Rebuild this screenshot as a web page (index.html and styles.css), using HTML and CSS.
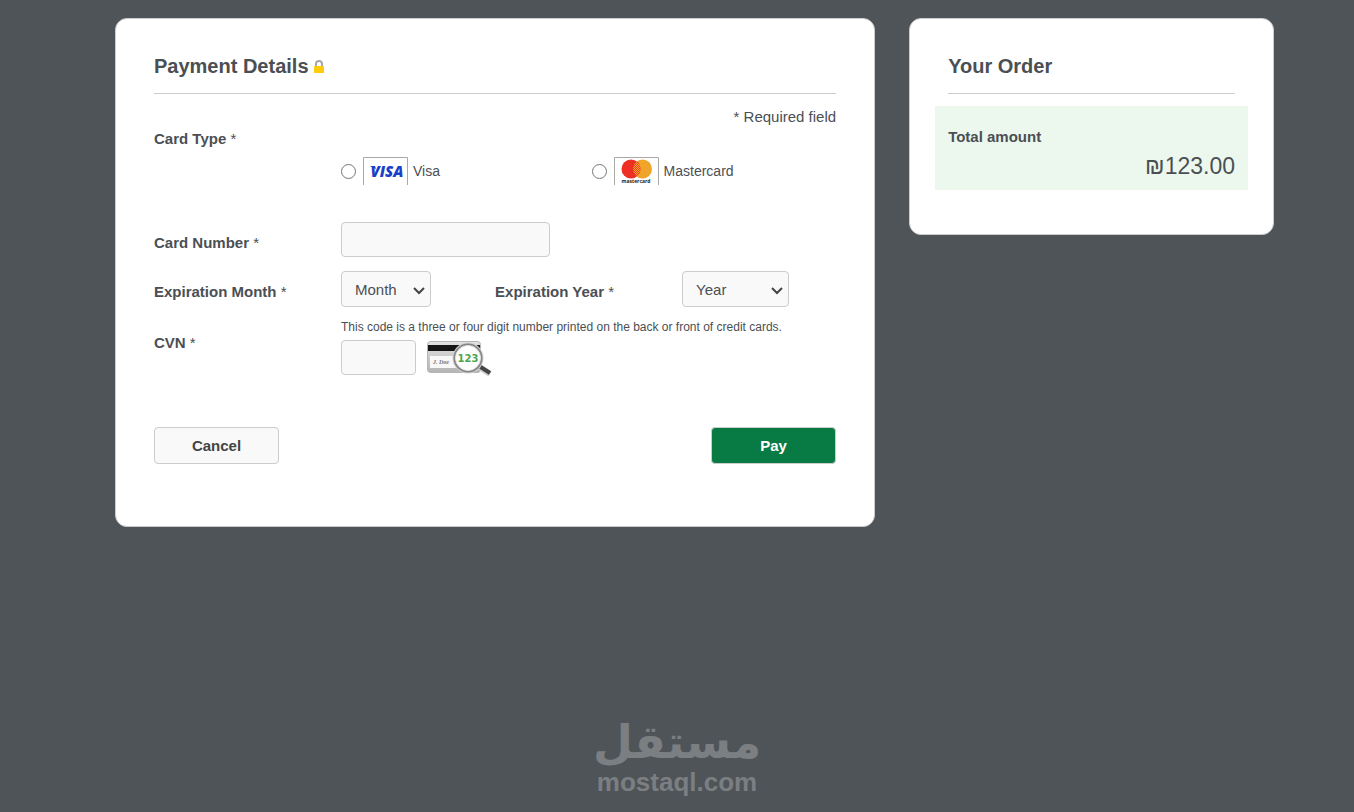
FILE: index.html
```html
<!DOCTYPE html>
<html lang="en">
<head>
  <meta charset="UTF-8">
  <meta name="viewport" content="width=device-width, initial-scale=1">
  <title>Payment Details</title>
  <link rel="stylesheet" href="styles.css">
</head>
<body>
  <main class="container">
    <!-- Payment form -->
    <form class="card payment">
      <h1 class="card-title">Payment Details
        <svg class="lock" viewBox="3 0 12 14" aria-hidden="true">
          <path d="M5 7V4a3 3 0 0 1 6 0V7" fill="none" stroke="#a6a6a6" stroke-width="2"/>
          <rect x="3" y="6" width="10" height="7" rx="0.500" fill="#ffcc0d"/>
        </svg>
      </h1>
      <p class="required">* Required field</p>

      <fieldset class="card-type">
        <legend>Card Type <span class="star">*</span></legend>
        <div class="options">
          <label class="option">
            <input type="radio" name="card_type" value="visa">
            <svg class="brand" viewBox="0 0 45 28" aria-hidden="true">
              <path d="M0.500 28V0.500h44V28" fill="#fff" stroke="#a9a9a9"/>
              <text x="24" y="20" class="visa-text">VISA</text>
              <path d="M7 9h5l1 3z" fill="#1a3fc8"/>
            </svg>
            <span>Visa</span>
          </label>
          <label class="option">
            <input type="radio" name="card_type" value="mastercard">
            <svg class="brand" viewBox="0 0 45 28" aria-hidden="true">
              <defs>
                <pattern id="dots" width="2" height="2" patternUnits="userSpaceOnUse">
                  <rect width="2" height="2" fill="#f5a623"/>
                  <rect width="1" height="1" fill="#ee4423"/>
                  <rect x="1" y="1" width="1" height="1" fill="#ee4423"/>
                </pattern>
              </defs>
              <path d="M0.500 28V0.500h44V28" fill="#fff" stroke="#a9a9a9"/>
              <circle cx="28.500" cy="12" r="9.500" fill="#f0a52a"/>
              <circle cx="17" cy="12" r="9.500" fill="#ee2f24"/>
              <path d="M22.750 4.500a9.500 9.500 0 0 1 0 15a9.500 9.500 0 0 1 0-15z" fill="url(#dots)"/>
              <text x="22" y="26" class="mc-text">mastercard</text>
            </svg>
            <span>Mastercard</span>
          </label>
        </div>
      </fieldset>

      <div class="row number-row">
        <label for="card-number">Card Number <span class="star">*</span></label>
        <input type="text" id="card-number" class="field card-number" autocomplete="off">
      </div>

      <div class="expiry">
        <div class="row">
          <label for="month">Expiration Month <span class="star">*</span></label>
          <select id="month" class="field month">
            <option>Month</option>
            <option>01</option><option>02</option><option>03</option><option>04</option>
            <option>05</option><option>06</option><option>07</option><option>08</option>
            <option>09</option><option>10</option><option>11</option><option>12</option>
          </select>
        </div>
        <div class="row">
          <label for="year">Expiration Year <span class="star">*</span></label>
          <select id="year" class="field year">
            <option>Year</option>
            <option>2024</option><option>2025</option><option>2026</option><option>2027</option>
          </select>
        </div>
      </div>

      <div class="row cvn-row">
        <label for="cvn">CVN <span class="star">*</span></label>
        <div>
          <p class="note" id="cvn-note">This code is a three or four digit number printed on the back or front of credit cards.</p>
          <div class="cvn-line">
            <input type="text" id="cvn" class="field cvn" aria-describedby="cvn-note" autocomplete="off">
            <svg class="cvn-card" viewBox="0 0 66 36" aria-hidden="true">
              <defs>
                <linearGradient id="plastic" x1="0" y1="0" x2="0" y2="1">
                  <stop offset="0" stop-color="#e2e2e2"/>
                  <stop offset="1" stop-color="#b5b5b5"/>
                </linearGradient>
              </defs>
              <rect x="1.500" y="1.500" width="53" height="31" rx="3" fill="url(#plastic)" stroke="#b5b5b5"/>
              <rect x="2" y="5" width="52" height="6" fill="#151515"/>
              <rect x="4" y="16" width="32" height="12" fill="#f8f8f8"/>
              <text x="7" y="24" class="sign-text">J. Doe</text>
              <path d="M52 26l12 8" stroke="#cfcfcf" stroke-width="6"/>
              <path d="M53 26l11 7" stroke="#454545" stroke-width="4"/>
              <circle cx="42" cy="18" r="15.500" fill="#d0d0d0"/>
              <circle cx="42" cy="18" r="14.500" fill="#858585"/>
              <circle cx="42" cy="18" r="12.500" fill="#fff" stroke="#e4e4e4"/>
              <text x="42" y="22" class="digits-text">123</text>
            </svg>
          </div>
        </div>
      </div>

      <div class="actions">
        <button type="button" class="btn">Cancel</button>
        <button type="submit" class="btn btn-pay">Pay</button>
      </div>
    </form>

    <!-- Order summary -->
    <aside class="card order">
      <h2 class="card-title">Your Order</h2>
      <div class="total">
        <p class="total-label">Total amount</p>
        <p class="total-value">₪123.00</p>
      </div>
    </aside>
  </main>

  <footer class="watermark">
    <span class="watermark-ar" lang="ar" dir="rtl">مستقل</span>
    <span class="watermark-en">mostaql.com</span>
  </footer>
</body>
</html>
```
FILE: styles.css
```css
:root {
  --color-page: #4f5458;
  --color-text: #4b4f54;
  --color-line: #cccccc;
  --color-field: #f9f9f9;
  --color-pay: #087a43;
  --color-total: #ecf8ed;
  --color-mark: #7b7f82;
  --label-width: 187px;
}
*, *::before, *::after { box-sizing: border-box; }
body {
  margin: 0;
  min-height: 100vh;
  display: flex;
  flex-direction: column;
  background: var(--color-page);
  color: var(--color-text);
  font-family: "Liberation Sans", Arial, sans-serif;
  font-size: 15px;
  line-height: 20px;
}
p { margin: 0; }

.container {
  flex: 1;
  display: grid;
  grid-template-columns: 25fr 12fr;
  align-items: start;
  gap: 34px;
  padding: 18px 80px 40px 115px;
}
.card {
  background: #fff;
  border: 1px solid var(--color-line);
  border-radius: 12px;
  padding: 36px 38px 62px;
}
.card-title {
  margin: 0;
  padding-bottom: 16px;
  border-bottom: 1px solid var(--color-line);
  font-size: 20px;
  line-height: 22px;
}
.lock { width: 12px; height: 14px; vertical-align: -1px; }
.required { margin-top: 13px; text-align: right; }

/* Form rows */
label, legend { font-weight: bold; }
.star { font-weight: normal; }
.card-type { margin: 2px 0 0; padding: 0; border: 0; }
.card-type legend { padding: 0; }
.options {
  display: grid;
  grid-template-columns: 1fr 1fr;
  gap: 6px;
  margin: 8px 0 0 var(--label-width);
}
.option {
  display: flex;
  align-items: center;
  font-size: 14px;
  font-weight: normal;
}
.option input { width: 15px; height: 15px; margin: 0 7px 0 0; }
.brand { width: 45px; height: 28px; margin-right: 5px; }
.visa-text {
  font: italic 800 15px "Open Sans", sans-serif;
  fill: #1a3fc8;
  text-anchor: middle;
}
.mc-text {
  font: bold 5px "Open Sans", sans-serif;
  fill: #222;
  text-anchor: middle;
}

.row {
  display: grid;
  grid-template-columns: var(--label-width) 1fr;
  align-items: center;
}
.row label { padding-top: 6px; }
.number-row { margin-top: 37px; }
.expiry {
  display: grid;
  grid-template-columns: 1fr 1fr;
  margin-top: 14px;
}
.field {
  height: 35px;
  padding: 0 13px;
  background: var(--color-field);
  border: 1px solid var(--color-line);
  border-radius: 4px;
  color: var(--color-text);
  font: inherit;
}
select.field {
  height: 36px;
  padding-top: 1px;
  appearance: none;
  background: var(--color-field) url("data:image/svg+xml,%3Csvg xmlns='http://www.w3.org/2000/svg' width='12' height='8'%3E%3Cpath d='M1 1l5 5 5-5' fill='none' stroke='%23444' stroke-width='2'/%3E%3C/svg%3E") no-repeat right 5px top 15px;
}
.card-number { width: 209px; }
.month { width: 90px; }
.year { width: 107px; }
.cvn { width: 75px; }
.cvn-row { align-items: start; margin-top: 10px; }
.cvn-row label { padding-top: 16px; }
.note { font-size: 12px; }
.cvn-line { display: flex; gap: 10px; margin-top: 3px; }
.cvn-card { width: 66px; height: 36px; }
.sign-text { font: italic bold 6px "Liberation Serif", serif; fill: #777; }
.digits-text {
  font: bold 10px "DejaVu Sans", sans-serif;
  fill: #4da64d;
  text-anchor: middle;
}

.actions {
  display: flex;
  justify-content: space-between;
  margin-top: 51px;
}
.btn {
  width: 125px;
  height: 37px;
  border: 1px solid var(--color-line);
  border-radius: 4px;
  background: var(--color-field);
  color: #444;
  font: inherit;
  font-weight: bold;
  cursor: pointer;
}
.btn-pay { background: var(--color-pay); color: #fff; }

/* Order summary */
.order { padding-bottom: 44px; }
.total {
  margin: 12px -13px 0;
  padding: 21px 13px 10px;
  background: var(--color-total);
}
.total-label { font-weight: bold; }
.total-value {
  margin-top: 5px;
  font-size: 23px;
  line-height: 28px;
  text-align: right;
}

.watermark {
  display: flex;
  flex-direction: column;
  align-items: center;
  padding-bottom: 15px;
  color: var(--color-mark);
  font-weight: bold;
}
.watermark-ar {
  font-family: "DejaVu Sans", sans-serif;
  font-size: 46px;
  line-height: 50px;
}
.watermark-en { font-size: 26px; line-height: 30px; }
```
